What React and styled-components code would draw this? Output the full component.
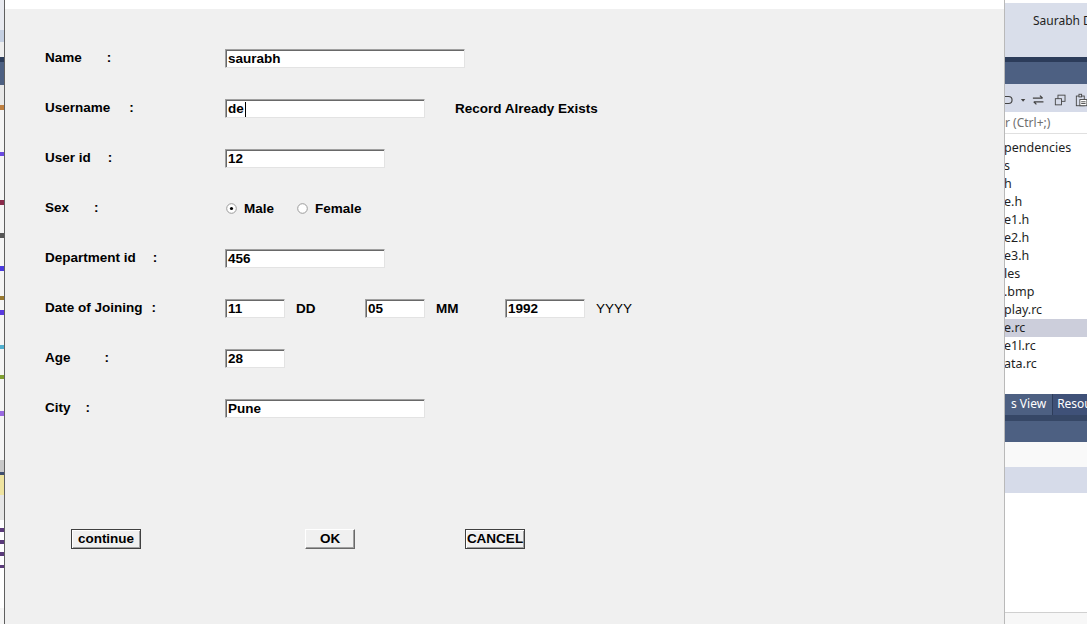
import React from "react";
import styled, { createGlobalStyle } from "styled-components";

const GlobalStyle = createGlobalStyle`
  html, body { margin: 0; padding: 0; background: #fff; }
  * { box-sizing: border-box; }
`;

const Page = styled.div`
  display: flex;
  width: 1087px;
  height: 624px;
  overflow: hidden;
  font-family: "Liberation Sans", Arial, sans-serif;
`;

/* ---------- editor sliver on the left ---------- */

const EditorEdge = styled.div`
  width: 5px;
  display: flex;
  flex-direction: column;
  border-right: 1px solid #5f5f5f;
  background: #f5f5f5;
`;

const EdgePiece = styled.div`
  height: ${(p) => p.h}px;
  background: ${(p) => p.bg};
  flex-shrink: 0;
`;

/* ---------- the dialog ---------- */

const Dialog = styled.div`
  width: 1000px;
  display: flex;
  flex-direction: column;
  border-right: 1px solid #b9b9b9;
`;

const TitleStrip = styled.div`
  height: 9px;
  background: #fff;
`;

const Body = styled.div`
  flex: 1;
  background: #f0f0f0;
  padding: 23px 0 0 40px;
  font-weight: bold;
  font-size: 13.5px;
  color: #000;
`;

const Row = styled.div`
  display: grid;
  grid-template-columns: 180px auto;
  align-items: center;
  height: 50px;
`;

const Label = styled.div`
  display: flex;
  white-space: nowrap;
`;

const Colon = styled.span`
  margin-left: ${(p) => p.gap}px;
`;

const Controls = styled.div`
  display: flex;
  align-items: center;
  padding-top: 2px;
  padding-left: ${(p) => p.indent || 0}px;
`;

const Field = styled.div`
  width: ${(p) => p.w}px;
  height: 19px;
  background: #fff;
  border: 1px solid;
  border-color: #a0a0a0 #e3e3e3 #e3e3e3 #a0a0a0;
  box-shadow: inset 1px 1px 0 #696969;
  padding: 2px 0 0 2px;
  line-height: 16px;
  display: flex;
  align-items: center;
  white-space: nowrap;
`;

const Caret = styled.span`
  display: inline-block;
  width: 1px;
  height: 15px;
  background: #000;
  margin-left: 1px;
`;

const Note = styled.span`
  margin-left: 30px;
`;

const DateGroup = styled.div`
  width: ${(p) => p.w}px;
  display: flex;
  align-items: center;
`;

const Unit = styled.span`
  margin-left: 11px;
  font-weight: ${(p) => (p.light ? "normal" : "bold")};
`;

const RadioOption = styled.label`
  display: flex;
  align-items: center;
  gap: 7px;
  margin-right: ${(p) => p.after || 0}px;
`;

const ButtonRow = styled.div`
  display: flex;
  margin-top: 97px;
  padding-left: 26px;
`;

const PushButton = styled.button`
  width: ${(p) => p.w}px;
  height: 20px;
  margin-left: ${(p) => p.offset || 0}px;
  padding: 0 0 1px;
  background: #f0f0f0;
  font-family: inherit;
  font-weight: bold;
  font-size: 13.5px;
  color: #000;
  border: 1px solid;
  border-color: ${(p) => (p.framed ? "#404040" : "#fff #696969 #696969 #fff")};
  box-shadow: ${(p) =>
    p.framed
      ? "inset 1px 1px 0 #fff, inset -1px -1px 0 #a0a0a0"
      : "inset -1px -1px 0 #a0a0a0"};
`;

const Radio = ({ checked }) => (
  <svg width="11" height="11" viewBox="0 0 11 11">
    <circle cx="5.5" cy="5.5" r="4.8" fill="#fff" stroke="#9a9a9a" strokeWidth="1" />
    {checked && <circle cx="5.5" cy="5.5" r="1.6" fill="#000" />}
  </svg>
);

/* ---------- solution explorer sliver on the right ---------- */

const Explorer = styled.div`
  flex: 1;
  display: flex;
  flex-direction: column;
  font-family: "Noto Sans", "Open Sans", sans-serif;
  font-size: 12.5px;
  color: #1e1e1e;
  white-space: nowrap;
  overflow: hidden;
`;

const Band = styled.div`
  height: ${(p) => p.h}px;
  flex-shrink: 0;
  background: ${(p) => p.bg};
  border-top: ${(p) => (p.line ? `1px solid ${p.line}` : "none")};
`;

const UserBand = styled.div`
  height: 57px;
  flex-shrink: 0;
  background: #d9deea;
  border-top: 3px solid #fff;
  padding: 9px 0 0 28px;
  font-size: 12px;
`;

const Toolbar = styled.div`
  height: 28px;
  flex-shrink: 0;
  background: #d6dbe9;
  display: flex;
  align-items: center;
  gap: 6px;
  padding-top: 4px;
  color: #424242;
`;

const Search = styled.div`
  height: 22px;
  flex-shrink: 0;
  background: #fff;
  border-bottom: 1px solid #e0e0e0;
  color: #707070;
  padding: 2px 0 0 0;
  margin-bottom: 5px;
  font-size: 12px;
`;

const Item = styled.div`
  height: 18px;
  line-height: 18px;
  flex-shrink: 0;
  margin-left: -2px;
  padding-left: 1px;
  background: ${(p) => (p.selected ? "#cccedb" : "transparent")};
`;

const Tabs = styled.div`
  height: 21px;
  flex-shrink: 0;
  display: flex;
  background: #3f5178;
  color: #fff;
  line-height: 20px;
  font-size: 12px;
`;

const Tab = styled.div`
  padding: 0 6px 0 ${(p) => p.pl || 6}px;
  background: ${(p) => p.bg || "transparent"};
  border-right: 1px solid #2d3c5a;
`;

const Fill = styled.div`
  flex: 1;
  background: #fff;
`;

const items = [
  "pendencies",
  "s",
  "h",
  "e.h",
  "e1.h",
  "e2.h",
  "e3.h",
  "les",
  ".bmp",
  "play.rc",
  "e.rc",
  "e1l.rc",
  "ata.rc",
];

// slices of the code editor that peek out from behind the dialog
const edge = [
  [30, "#e8eaf0"],
  [12, "#c5d0e2"],
  [15, "#eeeeee"],
  [5, "#2c3c5a"],
  [23, "#4d6082"],
  [20, "#e8e8e8"],
  [5, "#c08040"],
  [42, "#f5f5f5"],
  [4, "#6a4ae0"],
  [44, "#f5f5f5"],
  [5, "#8a2a4a"],
  [28, "#f5f5f5"],
  [5, "#555"],
  [28, "#f5f5f5"],
  [5, "#4a3ae0"],
  [25, "#f5f5f5"],
  [4, "#9a7a30"],
  [10, "#f5f5f5"],
  [5, "#5a3ae0"],
  [30, "#f5f5f5"],
  [4, "#50b0d0"],
  [26, "#f5f5f5"],
  [4, "#80a030"],
  [32, "#f5f5f5"],
  [5, "#9a6ae0"],
  [44, "#f5f5f5"],
  [12, "#c8c8c8"],
  [3, "#3f4f70"],
  [20, "#efe4a0"],
  [25, "#e6e6e6"],
  [8, "#fff"],
  [4, "#5a3a7a"],
  [8, "#fff"],
  [4, "#5a3a7a"],
  [8, "#fff"],
  [4, "#5a3a7a"],
  [9, "#fff"],
  [3, "#5a3a7a"],
  [40, "#fff"],
];

export default function App() {
  return (
    <Page>
      <GlobalStyle />
      <EditorEdge>
        {edge.map(([h, bg], i) => (
          <EdgePiece key={i} h={h} bg={bg} />
        ))}
      </EditorEdge>

      <Dialog>
        <TitleStrip />
        <Body>
          <Row>
            <Label>Name<Colon gap={25}>:</Colon></Label>
            <Controls><Field w={240}>saurabh</Field></Controls>
          </Row>
          <Row>
            <Label>Username<Colon gap={19}>:</Colon></Label>
            <Controls>
              <Field w={200}>de<Caret /></Field>
              <Note>Record Already Exists</Note>
            </Controls>
          </Row>
          <Row>
            <Label>User id<Colon gap={17}>:</Colon></Label>
            <Controls><Field w={160}>12</Field></Controls>
          </Row>
          <Row>
            <Label>Sex<Colon gap={25}>:</Colon></Label>
            <Controls indent={1}>
              <RadioOption after={23}><Radio checked />Male</RadioOption>
              <RadioOption><Radio />Female</RadioOption>
            </Controls>
          </Row>
          <Row>
            <Label>Department id<Colon gap={17}>:</Colon></Label>
            <Controls><Field w={160}>456</Field></Controls>
          </Row>
          <Row>
            <Label>Date of Joining<Colon gap={9}>:</Colon></Label>
            <Controls>
              <DateGroup w={140}><Field w={60}>11</Field><Unit>DD</Unit></DateGroup>
              <DateGroup w={140}><Field w={60}>05</Field><Unit>MM</Unit></DateGroup>
              <DateGroup w={160}><Field w={80}>1992</Field><Unit light>YYYY</Unit></DateGroup>
            </Controls>
          </Row>
          <Row>
            <Label>Age<Colon gap={34}>:</Colon></Label>
            <Controls><Field w={60}>28</Field></Controls>
          </Row>
          <Row>
            <Label>City<Colon gap={15}>:</Colon></Label>
            <Controls><Field w={200}>Pune</Field></Controls>
          </Row>

          <ButtonRow>
            <PushButton w={70} framed>continue</PushButton>
            <PushButton w={50} offset={164}>OK</PushButton>
            <PushButton w={60} offset={110} framed>CANCEL</PushButton>
          </ButtonRow>
        </Body>
      </Dialog>

      <Explorer>
        <UserBand>Saurabh D</UserBand>
        <Band h={5} bg="#2c3c5a" />
        <Band h={22} bg="#4d6082" />
        <Toolbar>
          <svg width="10" height="14" viewBox="0 0 10 14">
            <path d="M0 3h4a3 3 0 0 1 0 8H0" fill="none" stroke="#424242" strokeWidth="1.3" />
          </svg>
          <svg width="7" height="14" viewBox="0 0 7 14">
            <path d="M1 6h5l-2.5 3z" fill="#424242" />
          </svg>
          <svg width="14" height="14" viewBox="0 0 14 14">
            <path d="M1 5h11M9 2l3 3M13 9H2M5 12l-3-3" fill="none" stroke="#424242" strokeWidth="1.4" />
          </svg>
          <svg width="14" height="14" viewBox="0 0 14 14" style={{ marginLeft: 4 }}>
            <rect x="4.5" y="1.5" width="8" height="7" fill="none" stroke="#424242" />
            <rect x="1.5" y="5.5" width="7" height="7" fill="#d6dbe9" stroke="#424242" />
          </svg>
          <svg width="14" height="14" viewBox="0 0 14 14" style={{ marginLeft: 2 }}>
            <rect x="1.5" y="2.5" width="9" height="11" fill="none" stroke="#424242" />
            <rect x="4.5" y="0.5" width="3" height="3" fill="#d6dbe9" stroke="#424242" />
            <rect x="5.5" y="6.5" width="8" height="7" fill="#fff" stroke="#424242" />
            <path d="M7 9h5M7 11h5" stroke="#424242" />
          </svg>
        </Toolbar>
        <Search>r (Ctrl+;)</Search>
        {items.map((t, i) => (
          <Item key={i} selected={i === 10}>
            {t}
          </Item>
        ))}
        <Band h={21} bg="#fff" />
        <Tabs>
          <Tab bg="#4d6082" pl={0}>s View</Tab>
          <Tab pl={4}>Resource</Tab>
        </Tabs>
        <Band h={6} bg="#364766" />
        <Band h={21} bg="#4d6082" />
        <Band h={25} bg="#f9f9f9" />
        <Band h={26} bg="#d6dbe9" />
        <Fill />
        <Band h={12} bg="#f7f7f7" line="#d0d0d0" />
      </Explorer>
    </Page>
  );
}
